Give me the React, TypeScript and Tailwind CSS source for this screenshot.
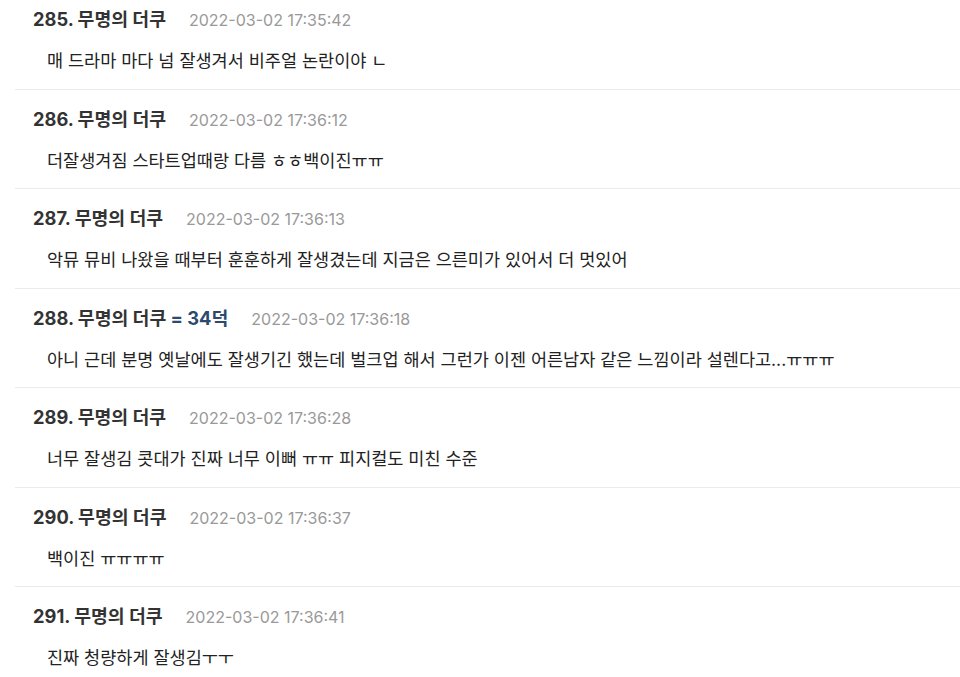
import React from "react";

type Row = { n: number; extra?: string; date: string; body: string };

const rows: Row[] = [
  { n: 285, date: "2022-03-02 17:35:42", body: "매 드라마 마다 넘 잘생겨서 비주얼 논란이야 ㄴ" },
  { n: 286, date: "2022-03-02 17:36:12", body: "더잘생겨짐 스타트업때랑 다름 ㅎㅎ백이진ㅠㅠ" },
  { n: 287, date: "2022-03-02 17:36:13", body: "악뮤 뮤비 나왔을 때부터 훈훈하게 잘생겼는데 지금은 으른미가 있어서 더 멋있어" },
  { n: 288, extra: "= 34덕", date: "2022-03-02 17:36:18", body: "아니 근데 분명 옛날에도 잘생기긴 했는데 벌크업 해서 그런가 이젠 어른남자 같은 느낌이라 설렌다고...ㅠㅠㅠ" },
  { n: 289, date: "2022-03-02 17:36:28", body: "너무 잘생김 콧대가 진짜 너무 이뻐 ㅠㅠ 피지컬도 미친 수준" },
  { n: 290, date: "2022-03-02 17:36:37", body: "백이진 ㅠㅠㅠㅠ" },
  { n: 291, date: "2022-03-02 17:36:41", body: "진짜 청량하게 잘생김ㅜㅜ" },
];

export default function App() {
  return (
    <div
      className="w-[960px] h-[677px] overflow-hidden bg-white"
      style={{ fontFamily: 'Inter, "Noto Sans CJK KR", sans-serif' }}
    >
      <div className="pl-[15px] -mt-[10px]">
        {rows.map((r) => (
          <div key={r.n} className="border-b border-[#ebebeb] pt-[19px] pb-[15.5px]">
            <div className="flex items-center h-[22px] pl-[18px]">
              <span className="text-[18.3px] font-bold text-[#333]">
                {r.n}. 무명의 더쿠
                {r.extra && <span className="text-[#2b4a6e]"> {r.extra}</span>}
              </span>
              <span className="ml-[23px] text-[16px] text-[#999]">{r.date}</span>
            </div>
            <div className="mt-[18px] h-[24px] leading-[24px] pl-[32px] text-[17.5px] text-[#222]">
              {r.body}
            </div>
          </div>
        ))}
      </div>
    </div>
  );
}
